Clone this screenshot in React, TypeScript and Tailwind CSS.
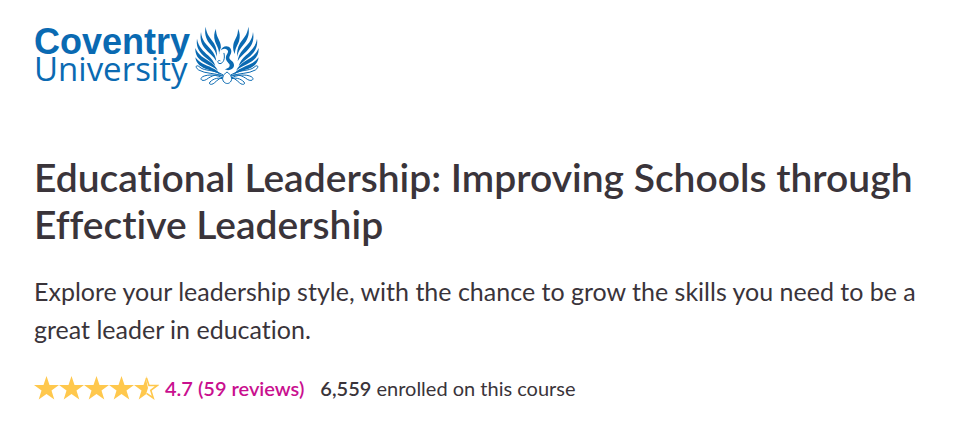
const STAR = 'M12.5 0 L15.5 9 H25 L17.5 14.5 L20.3 23.5 L12.5 18 L4.7 23.5 L7.5 14.5 L0 9 H9.5 Z'

function Star({ half = false }: { half?: boolean }) {
  return (
    <svg viewBox="0 0 25 24" className="h-6 w-[25px]" aria-hidden="true">
      {half ? (
        <>
          <path d="M12.5 0 V5 L14 12 L12 18.3 L4.7 23.5 L7.5 14.5 L0 9 H9.5 Z" fill="#ffc84d" />
          <path
            d="M12.5 2 L15 9.5 H23.2 L16.8 14.3 L19.2 22 L12.5 17.3"
            fill="none"
            stroke="#ffc84d"
            strokeWidth="1.6"
          />
        </>
      ) : (
        <path d={STAR} fill="#ffc84d" />
      )}
    </svg>
  )
}

// One wing: solid upper feathers, then the thin looping lines of the tail
function Wing() {
  return (
    <g>
      <path d="M47 20 C50 46 62 54 72 70 C80 84 82 98 80 110 C77 92 68 82 58 70 C47 54 43 40 47 20 Z" />
      <path d="M78 26 C77 48 89 58 92 74 C94 86 91 96 87 102 C88 88 80 78 75 64 C71 50 72 38 78 26 Z" />
      <path d="M33 36 C35 62 50 74 62 88 C73 100 78 112 79 124 C70 108 60 102 49 90 C34 74 29 58 33 36 Z" />
      <path d="M21 56 C25 82 42 94 54 106 C65 116 72 126 76 138 C63 124 52 118 41 108 C24 92 18 76 21 56 Z" />
      <path d="M16 84 C25 106 42 114 57 124 C70 132 78 141 84 152 C69 141 55 135 41 127 C24 117 15 104 16 84 Z" />
      <path d="M16 112 C29 130 48 135 65 143 C79 149 87 156 93 165 C78 156 62 151 46 146 C28 139 18 128 16 112 Z" />
      <g fill="none" stroke="#0a6ab2" strokeWidth="3" strokeLinecap="round">
        <path d="M96 168 C74 158 46 162 26 150 C12 140 20 132 30 142 C44 154 72 148 98 164" />
        <path d="M98 174 C82 164 54 162 38 170 C26 178 38 186 50 178 C66 166 84 160 100 168" />
        <path d="M102 178 C86 170 70 176 60 186 C54 194 66 196 74 188 C82 180 92 172 106 170" />
      </g>
    </g>
  )
}

function Phoenix() {
  return (
    <svg viewBox="0 0 225 216" className="h-[72px] w-[75px]" fill="#0a6ab2" aria-hidden="true">
      <Wing />
      <g transform="translate(222 0) scale(-1 1)">
        <Wing />
      </g>
      <path
        d="M92 92 C96 78 114 74 122 86 C128 98 118 106 118 114 C120 122 134 124 132 138 C130 148 116 154 104 148 C114 146 122 140 118 132 C112 124 106 120 108 110 C110 102 118 96 112 90 C106 84 98 86 92 92 Z"
        stroke="white"
        strokeWidth="5"
        paintOrder="stroke"
      />
      <path
        d="M102 100 C106 116 100 130 90 131 C80 130 82 118 90 122"
        fill="none"
        stroke="#0a6ab2"
        strokeWidth="3"
        strokeLinecap="round"
      />
      <path
        d="M111 156 C98 164 94 178 102 186 C108 192 116 192 121 186 C129 178 124 164 111 156 Z"
        fill="white"
        stroke="#0a6ab2"
        strokeWidth="3"
      />
    </svg>
  )
}

export default function App() {
  return (
    <main className="min-h-screen bg-white px-[34px] pt-5 font-['Lato',sans-serif] text-[#3a343a] [font-variant-ligatures:none]">
      <a href="#" aria-label="Coventry University" className="flex w-fit text-[#0a6ab2]">
        <span className="flex flex-col pt-1">
          <span className="font-['Liberation_Sans',sans-serif] text-[36px] leading-9 font-bold">Coventry</span>
          <span className="font-['Open_Sans',sans-serif] text-[33px] leading-[18px]">University</span>
        </span>
        <Phoenix />
      </a>

      <h1 className="mt-[62px] text-[39px] leading-[47px] font-semibold">
        Educational Leadership: Improving Schools through Effective Leadership
      </h1>
      <p className="mt-6 text-[25px] leading-[38px]">
        Explore your leadership style, with the chance to grow the skills you need to be a great leader in education.
      </p>

      <div className="mt-[26px] flex items-center text-[20px] leading-7">
        <span className="flex" role="img" aria-label="4.7 out of 5 stars">
          <Star />
          <Star />
          <Star />
          <Star />
          <Star half />
        </span>
        <a href="#reviews" className="ml-1.5 font-semibold text-[#c9108f]">
          4.7 (59 reviews)
        </a>
        <p className="ml-4">
          <strong className="font-semibold">6,559</strong> enrolled on this course
        </p>
      </div>
    </main>
  )
}
